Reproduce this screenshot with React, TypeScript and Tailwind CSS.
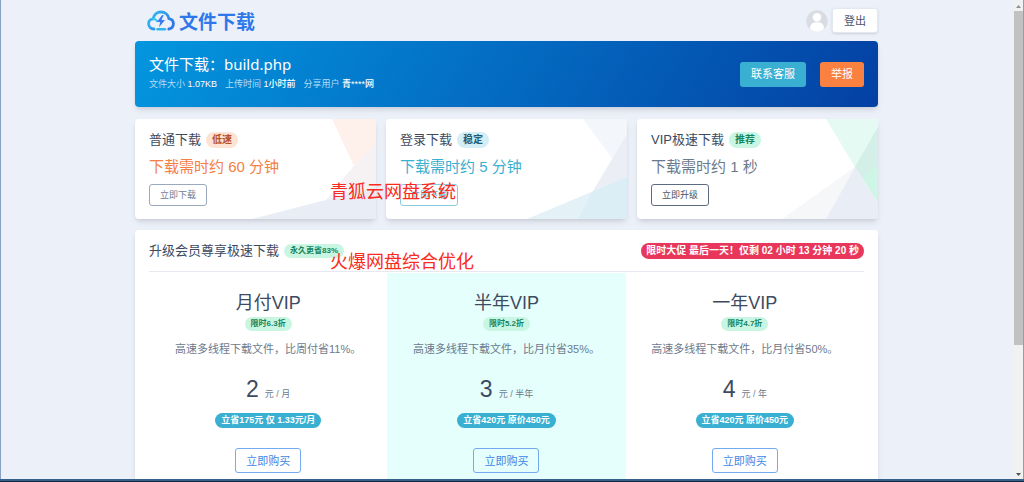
import type { ReactNode } from "react";

type Speed = {
  title: string;
  tag: string;
  time: string;
  action: string;
  tagClass: string;
  timeClass: string;
  buttonClass: string;
  art: ReactNode;
};

const speeds: Speed[] = [
  {
    title: "普通下载",
    tag: "低速",
    time: "下载需时约 60 分钟",
    action: "立即下载",
    tagClass: "bg-[#fde3d4] text-[#b8522a]",
    timeClass: "text-[#f58044]",
    buttonClass: "border-[#9aa9bc] text-[#718096]",
    art: (
      <>
        <path d="M197 0H241V25L219 47Z" fill="#fef1eb" />
        <path d="M241 25V100H175L219 47Z" fill="#f3f4f8" />
        <path d="M241 25V82L206 62L219 47Z" fill="#f6f2f3" />
        <path d="M117 100L241 68V100Z" fill="#e9edf5" />
      </>
    ),
  },
  {
    title: "登录下载",
    tag: "稳定",
    time: "下载需时约 5 分钟",
    action: "立即下载",
    tagClass: "bg-[#d5eef5] text-[#215d77]",
    timeClass: "text-[#39afd1]",
    buttonClass: "border-[#8accdf] text-[#39afd1]",
    art: (
      <>
        <path d="M197 0H241V58L226 39Z" fill="#f3f6fa" />
        <path d="M241 15V100H190Z" fill="#ebeff5" />
        <path d="M141 100L241 58V100Z" fill="#e4f2f8" />
        <path d="M192 100L206 73L241 58V100Z" fill="#dbeef5" />
      </>
    ),
  },
  {
    title: "VIP极速下载",
    tag: "推荐",
    time: "下载需时约 1 秒",
    action: "立即升级",
    tagClass: "bg-[#c9f6e2] text-[#17845a]",
    timeClass: "text-[#6c7a8d]",
    buttonClass: "border-[#5d6b80] text-[#4a5568]",
    art: (
      <>
        <path d="M189 0H241V8L218 48Z" fill="#e4faf2" />
        <path d="M241 8V84L218 48Z" fill="#cff5e6" />
        <path d="M241 8V45L225 59L218 48Z" fill="#d3efe7" />
        <path d="M145 100L218 48L189 100Z" fill="#f5f7f9" />
        <path d="M189 100L218 48L241 84V100Z" fill="#e9edf5" />
      </>
    ),
  },
];

const plans = [
  { name: "月付VIP", off: "限时6.3折", desc: "高速多线程下载文件，比周付省11%。", price: "2", unit: "元 / 月", save: "立省175元 仅 1.33元/月", tint: "" },
  { name: "半年VIP", off: "限时5.2折", desc: "高速多线程下载文件，比月付省35%。", price: "3", unit: "元 / 半年", save: "立省420元 原价450元", tint: "bg-[#e4fffc]" },
  { name: "一年VIP", off: "限时4.7折", desc: "高速多线程下载文件，比月付省50%。", price: "4", unit: "元 / 年", save: "立省420元 原价450元", tint: "" },
];

function CloudLogo() {
  return (
    <svg width="28" height="22" viewBox="0 0 28 22" fill="none" aria-hidden="true">
      <defs>
        <linearGradient id="cloud" x1="0" y1="0" x2="1" y2="0.6">
          <stop offset="0" stopColor="#35c4f0" />
          <stop offset="1" stopColor="#2f78ea" />
        </linearGradient>
      </defs>
      <path
        d="M7 19C3.8 18.8 1.6 16.7 1.6 13.8C1.6 11 3.6 9.2 6 8.9C6.8 4.8 10 2 14 2C18 2 21.2 4.8 21.9 8.6C24.6 9 26.4 11.1 26.4 13.8C26.4 16.6 24.5 18.6 21.8 19"
        stroke="url(#cloud)"
        strokeWidth="2.8"
        strokeLinecap="round"
      />
      <path d="M6 9C8 8.9 9.4 9.8 10 11" stroke="#35c4f0" strokeWidth="2" strokeLinecap="round" />
      <path d="M15.2 5L9.8 12H13.2L12 17.2L18 10H14.6L16.6 5Z" fill="#3a7cf0" />
      <path d="M10.5 19.3H18" stroke="#2fb6ee" strokeWidth="2.4" strokeLinecap="round" />
    </svg>
  );
}

function Avatar() {
  return (
    <svg width="22" height="22" viewBox="0 0 22 22" role="img" aria-label="用户头像">
      <clipPath id="round">
        <circle cx="11" cy="11" r="10.7" />
      </clipPath>
      <g clipPath="url(#round)">
        <rect width="22" height="22" fill="#d9dce3" />
        <circle cx="11" cy="7.2" r="4.2" fill="#fff" />
        <path d="M4.2 22V17.5C4.2 14 6.8 12.2 11 12.2S17.8 14 17.8 17.5V22Z" fill="#fff" />
      </g>
    </svg>
  );
}

export default function App() {
  return (
    <div className="relative flex h-screen flex-col overflow-hidden bg-[#ebf0f9] font-['Liberation_Sans','Noto_Sans_CJK_SC',sans-serif] text-[#3d4a5f]">
      <div className="flex min-h-0 flex-1 border-x border-[#85a0c0]">
        <main className="min-w-0 flex-1 overflow-hidden pr-[2px]">
          <div className="mx-auto max-w-[743px]">
            <header className="flex h-[41px] items-center justify-between">
              <a href="#" className="flex items-center gap-1 pl-3 font-['Noto_Sans_CJK_SC',sans-serif] text-[19px] leading-6 font-bold text-[#2f78ea]">
                <CloudLogo />
                文件下载
              </a>
              <div className="flex items-center gap-1">
                <Avatar />
                <button type="button" className="h-[25px] rounded-[3px] border border-[#e2e8f0] bg-white px-[11px] text-[11px] leading-4 text-[#4a5568] shadow-sm">
                  登出
                </button>
              </div>
            </header>

            <section className="flex h-[66px] items-center justify-between rounded bg-linear-[120deg] from-[#0396df] to-[#0440a4] px-[14px] text-white shadow-md">
              <div className="pb-1">
                <h1 className="font-['Noto_Sans','Noto_Sans_CJK_SC',sans-serif] text-[15px] leading-6">文件下载：build.php</h1>
                <p className="flex gap-2 text-[9px] leading-4 text-[#b5dcf6]">
                  <span>文件大小 <span className="text-white">1.07KB</span></span>
                  <span>上传时间 <span className="font-medium text-white">1小时前</span></span>
                  <span>分享用户 <span className="font-medium text-white">青****网</span></span>
                </p>
              </div>
              <div className="flex gap-[14px] text-[11px] leading-4">
                <button type="button" className="h-[25px] rounded-[3px] bg-[#39afd1] px-[11px]">联系客服</button>
                <button type="button" className="h-[25px] rounded-[3px] bg-[#fa8140] px-[11px]">举报</button>
              </div>
            </section>

            <section className="mt-3 grid grid-cols-3 gap-[10px]">
              {speeds.map((s) => (
                <article key={s.title} className="relative h-[100px] overflow-hidden rounded bg-white px-[14px] pt-3 shadow-md">
                  <svg className="absolute inset-0 h-full w-full" viewBox="0 0 241 100" preserveAspectRatio="none" aria-hidden="true">
                    {s.art}
                  </svg>
                  <div className="relative">
                    <h2 className="flex items-center gap-[5px] text-[13px] leading-[18px]">
                      {s.title}
                      <span className={`rounded-full px-[6px] text-[10px] leading-4 font-bold ${s.tagClass}`}>{s.tag}</span>
                    </h2>
                    <p className={`mt-[6px] text-[15px] leading-6 ${s.timeClass}`}>{s.time}</p>
                    <button type="button" className={`mt-[5px] block h-[22px] rounded-[3px] border px-[10px] text-[9px] leading-4 ${s.buttonClass}`}>
                      {s.action}
                    </button>
                  </div>
                </article>
              ))}
            </section>

            <section className="mt-[11px] rounded bg-white px-[14px] pb-8 shadow-md">
              <div className="flex h-[42px] items-center justify-between border-b border-[#e6eaf0]">
                <h2 className="flex items-center gap-[5px] text-[13px] leading-5">
                  升级会员尊享极速下载
                  <span className="rounded-full bg-[#c9f6e2] px-[6px] text-[8px] leading-[14px] font-bold text-[#17845a]">永久更省83%</span>
                </h2>
                <span className="rounded-full bg-[#e8375a] px-[5px] text-[10px] leading-4 font-bold text-white">
                  限时大促 最后一天！仅剩 02 小时 13 分钟 20 秒
                </span>
              </div>
              <div className="mt-px grid grid-cols-3">
                {plans.map((p) => (
                  <article key={p.name} className={`flex flex-col items-center pt-4 pb-4 ${p.tint}`}>
                    <h3 className="text-[18px] leading-7">{p.name}</h3>
                    <span className="rounded-full bg-[#c9f6e2] px-[6px] text-[8px] leading-[14px] font-bold text-[#17845a]">{p.off}</span>
                    <p className="mt-[10px] text-[11px] leading-4 text-[#6c7a8d]">{p.desc}</p>
                    <p className="mt-4 flex items-baseline gap-[6px] text-[23px] leading-8">
                      {p.price}
                      <span className="text-[9px] leading-4 text-[#6c7a8d]">{p.unit}</span>
                    </p>
                    <span className="mt-2 rounded-full bg-[#39afd1] px-[6px] text-[9px] leading-[15px] font-bold text-white">{p.save}</span>
                    <button type="button" className="mt-5 h-[25px] rounded-[3px] border border-[#74aaf0] px-[10px] text-[11px] leading-4 text-[#3f87e5]">
                      立即购买
                    </button>
                  </article>
                ))}
              </div>
            </section>
          </div>
        </main>
        <div className="flex w-[9px] shrink-0 flex-col items-center bg-[#f1f1f1]" aria-hidden="true">
          <svg width="9" height="11" viewBox="0 0 9 11">
            <path d="M2 8L4.5 5L7 8Z" fill="#8b9099" />
          </svg>
          <div className="h-[334px] w-full bg-[#c1c1c1]" />
          <svg className="mt-auto" width="9" height="8" viewBox="0 0 9 8">
            <path d="M2 2H7L4.5 5Z" fill="#4b535e" />
          </svg>
        </div>
      </div>
      <div className="h-[3px] shrink-0 border-b border-[#14243a] bg-[#35608a]" />

      <p className="absolute top-[180px] left-[330px] text-[18px] leading-6 text-[#fb2b20]">青狐云网盘系统</p>
      <p className="absolute top-[250px] left-[330px] text-[18px] leading-6 text-[#fb2b20]">火爆网盘综合优化</p>
    </div>
  );
}
